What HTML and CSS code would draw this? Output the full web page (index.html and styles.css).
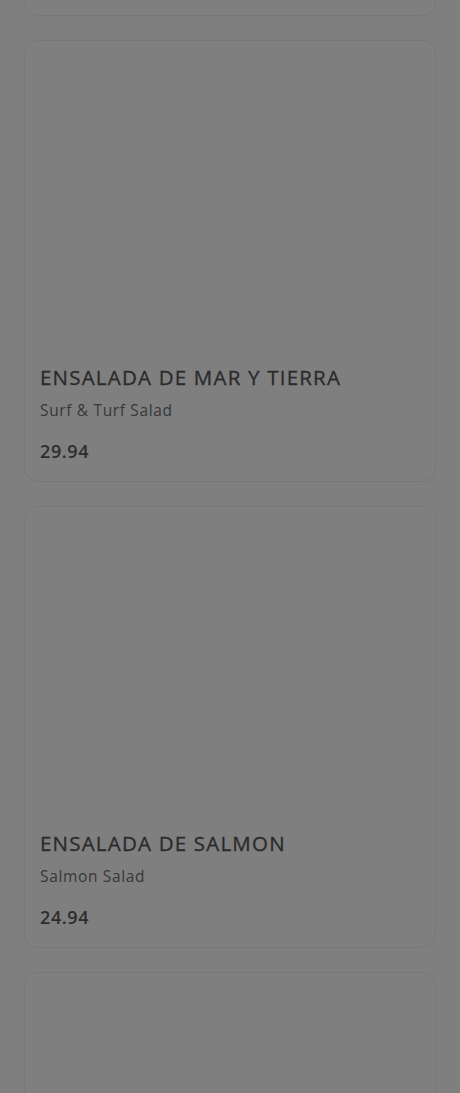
FILE: index.html
```html
<!DOCTYPE html>
<html lang="es">
<head>
    <meta charset="UTF-8">
    <title>Ensaladas</title>
    <link rel="stylesheet" href="styles.css">
</head>
<body>
    <div class="menu">
        <div class="card">
            <div class="card-img"></div>
            <div class="card-body">
                <h3 class="card-title">ENSALADA CESAR</h3>
                <p class="card-sub">Caesar Salad</p>
                <p class="card-price">19.94</p>
            </div>
        </div>
        <div class="card">
            <div class="card-img"></div>
            <div class="card-body">
                <h3 class="card-title">ENSALADA DE MAR Y TIERRA</h3>
                <p class="card-sub">Surf &amp; Turf Salad</p>
                <p class="card-price">29.94</p>
            </div>
        </div>
        <div class="card">
            <div class="card-img"></div>
            <div class="card-body">
                <h3 class="card-title">ENSALADA DE SALMON</h3>
                <p class="card-sub">Salmon Salad</p>
                <p class="card-price">24.94</p>
            </div>
        </div>
        <div class="card">
            <div class="card-img"></div>
            <div class="card-body">
                <h3 class="card-title">ENSALADA VERDE</h3>
                <p class="card-sub">Green Salad</p>
                <p class="card-price">17.94</p>
            </div>
        </div>
    </div>
    <div class="overlay"></div>
</body>
</html>
```

FILE: styles.css
```css
*{
    margin: 0; padding: 0; box-sizing: border-box;
}
body {
    background: #fff; font-family: "Open Sans", "Liberation Sans", sans-serif; color: #6c6c6c; overflow: hidden; height: 1093px;
}
.menu {
    display: flex; flex-direction: column; gap: 24px; padding: 0 24px; margin-top: -426px;
}
.card {
    height: 442px; border: 1px solid #eee; border-radius: 14px; display: flex; flex-direction: column; overflow: hidden;
}
.card-img {
    height: 310px; background: #fff;
}
.card-body {
    padding: 12px 15px 0;
}
.card-title {
    font-size: 20.5px; font-weight: 500; line-height: 28px; letter-spacing: 1.2px; color: #555; -webkit-text-stroke: 0.3px #555;
}
.card-sub {
    font-size: 15.5px; line-height: 22px; margin-top: 8px; letter-spacing: 0.65px; color: #707070;
}
.card-price {
    font-size: 18px; font-weight: 600; line-height: 24px; margin-top: 18px; letter-spacing: 0.6px; color: #5a5a5a;
}
/* fondo del modal */
.overlay {
    position: fixed; top: 0; left: 0; right: 0; bottom: 0; background: rgba(0,0,0,.5);
}
```
